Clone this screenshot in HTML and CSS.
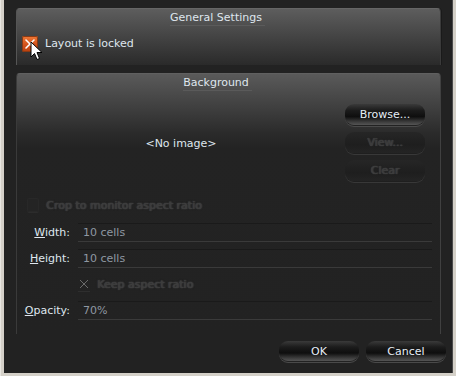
FILE: index.html
```html
<!DOCTYPE html>
<html>
<head>
<meta charset="utf-8">
<link rel="stylesheet" href="styles.css">
</head>
<body>
<div class="window">
  <div class="content">
    <section class="group general">
      <div class="title"><span>General Settings</span></div>
      <div class="lock-row">
        <span class="check-on">
          <svg width="16" height="16" viewBox="0 0 16 16"><path d="M4 4 L12 12 M12 4 L4 12" stroke="#fff" stroke-width="1.6" stroke-linecap="round"/></svg>
        </span>
        <span class="lbl">Layout is locked</span>
      </div>
      <svg class="cursor" width="14" height="20" viewBox="0 0 14 20"><path d="M1 1 L1 16 L4.5 12.5 L7 18.5 L9.5 17.5 L7 11.5 L12 11.5 Z" fill="#fff" stroke="#000" stroke-width="1" stroke-linejoin="miter"/></svg>
    </section>

    <section class="group background">
      <div class="title"><span>Background</span></div>
      <div class="image-area">
        <div class="preview">&lt;No image&gt;</div>
        <div class="side-buttons">
          <button class="btn">Browse...</button>
          <button class="btn disabled">View...</button>
          <button class="btn disabled">Clear</button>
        </div>
      </div>
      <div class="crop-row">
        <span class="check-off"></span>
        <span class="dis-text">Crop to monitor aspect ratio</span>
      </div>
      <div class="form">
        <label class="flabel"><u>W</u>idth:</label>
        <div class="field">10 cells</div>
        <label class="flabel"><u>H</u>eight:</label>
        <div class="field">10 cells</div>
        <span></span>
        <div class="keep-row">
          <span class="check-x">
            <svg width="12" height="12" viewBox="0 0 12 12"><path d="M2 2 L10 10 M10 2 L2 10" stroke="#6a6a6a" stroke-width="1"/></svg>
          </span>
          <span class="dis-text">Keep aspect ratio</span>
        </div>
        <label class="flabel"><u>O</u>pacity:</label>
        <div class="field">70%</div>
      </div>
    </section>

    <div class="footer">
      <button class="btn big">OK</button>
      <button class="btn big">Cancel</button>
    </div>
  </div>
</div>
</body>
</html>
```
FILE: styles.css
```css
* { box-sizing: border-box; }
html, body { margin: 0; padding: 0; }
body {
  width: 456px;
  height: 376px;
  overflow: hidden;
  font-family: "DejaVu Sans", Tahoma, sans-serif;
  font-size: 11px;
  color: #dfe6ee;
}
.window {
  width: 456px;
  height: 376px;
  background: #d4d0c8;
  padding: 0 3px 3px 3px;
  border-left: 1px solid #e8e6e0;
}
.content {
  width: 449px;
  height: 373px;
  background: #222222;
  border-right: 1px solid #4a4a4a;
  padding: 8px 0 0 12px;
  display: flex;
  flex-direction: column;
  position: relative;
}
.group {
  width: 425px;
  border: 1px solid #4a4a4a;
  border-bottom: none;
  border-radius: 4px 4px 0 0;
  position: relative;
}
.general {
  height: 57px;
  background: linear-gradient(#5d5d5d, #2a2a2a);
  border-color: #666 #3a3a3a #3a3a3a #555;
  box-shadow: 1px 0 0 #1a1a1a;
}
.title {
  display: flex;
  justify-content: center;
  height: 17px;
  padding: 2px 22px 0 0;
  line-height: 13px;
}
.title span {
  border-bottom: 1px solid rgba(255,255,255,0.08);
  padding: 0 3px 2px 0;
}
.lock-row {
  display: flex;
  align-items: center;
  gap: 7px;
  padding: 9px 0 0 5px;
}
.check-on {
  width: 16px;
  height: 16px;
  border-radius: 2px;
  background: linear-gradient(#f07a36, #d2521c 55%, #b8400f);
  box-shadow: inset 0 0 0 1px #8a3a14;
  display: flex;
}
.lbl { line-height: 16px; padding-top: 1px; }
.cursor {
  position: absolute;
  left: 13px;
  top: 32px;
}
.background {
  margin-top: 8px;
  height: 261px;
  background: linear-gradient(#5a5a5a 0px, #2a2a2a 60px, #232323 75px, #222 100%);
  border-color: #606060 #404040 transparent #3a3a3a;
}
.image-area {
  display: flex;
  padding-top: 13px;
}
.preview {
  width: 328px;
  display: flex;
  justify-content: center;
  align-items: center;
  height: 78px;
}
.side-buttons {
  display: flex;
  flex-direction: column;
  gap: 7px;
}
.btn {
  width: 80px;
  height: 21px;
  border: none;
  border-radius: 9px;
  font-family: "DejaVu Sans", Tahoma, sans-serif;
  font-size: 11px;
  color: #e6eef6;
  background: linear-gradient(#3a3a3a 0%, #1c1c1c 30%, #0e0e0e 60%, #3c3c3c 85%, #555 100%);
  box-shadow: 0 1px 0 #222, 0 2px 0 #4a4a4a;
  padding: 0;
  position: relative;
}
.btn.disabled {
  color: #3c3c3c;
  text-shadow: 0 0 1px #4a4a4a, 1px 0 1px #3c3c3c;
  background: linear-gradient(#262626, #1e1e1e 60%, #242424);
  box-shadow: 0 1px 0 #1f1f1f, 0 2px 0 #383838;
}
.crop-row {
  display: flex;
  align-items: center;
  gap: 7px;
  padding: 16px 0 0 10px;
}
.check-off {
  width: 12px;
  height: 14px;
  border-radius: 2px;
  background: #242424;
  box-shadow: inset 0 0 0 1px #282828, 0 1px 0 #2c2c2c;
}
.dis-text {
  color: #3c3c3c;
  text-shadow: 0 0 1px #4a4a4a, 1px 0 1px #3c3c3c, 0 0 2px #333;
}
.form {
  display: grid;
  grid-template-columns: 53px 354px;
  column-gap: 8px;
  row-gap: 7px;
  padding-top: 11px;
  align-items: center;
}
.flabel {
  text-align: right;
  color: #dfe6ee;
}
.field {
  height: 19px;
  border-top: 1px solid #1a1a1a;
  border-bottom: 1px solid #3a3a3a;
  line-height: 17px;
  padding-left: 5px;
  color: #8f98a2;
}
.keep-row {
  display: flex;
  align-items: center;
  gap: 7px;
  height: 19px;
}
.check-x {
  width: 12px;
  height: 14px;
  display: flex;
  align-items: center;
  border-bottom: 1px solid #2e2e2e;
}
.footer {
  display: flex;
  justify-content: flex-end;
  gap: 7px;
  padding: 0 6px 0 0;
  margin-top: auto;
  margin-bottom: 12px;
}
.btn.big {
  width: 80px;
  height: 20px;
}
```
